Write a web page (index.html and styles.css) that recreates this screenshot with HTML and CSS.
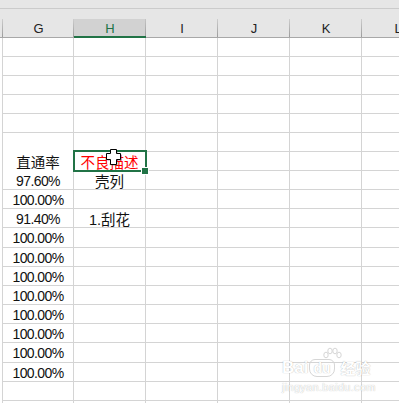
FILE: index.html
```html
<!DOCTYPE html>
<html lang="zh-CN">
<head>
<meta charset="utf-8">
<title>Sheet</title>
<link rel="stylesheet" href="styles.css">
</head>
<body>
<div class="sheet">
  <div class="top"></div>
  <div class="heads">
    <div class="ch"></div>
    <div class="ch">G</div>
    <div class="ch sel">H</div>
    <div class="ch">I</div>
    <div class="ch">J</div>
    <div class="ch">K</div>
    <div class="ch">L</div>
  </div>
  <div class="body">
    <div class="c e"></div><div class="c"></div><div class="c"></div><div class="c"></div><div class="c"></div><div class="c"></div><div class="c"></div>
    <div class="c e"></div><div class="c"></div><div class="c"></div><div class="c"></div><div class="c"></div><div class="c"></div><div class="c"></div>
    <div class="c e"></div><div class="c"></div><div class="c"></div><div class="c"></div><div class="c"></div><div class="c"></div><div class="c"></div>
    <div class="c e"></div><div class="c"></div><div class="c"></div><div class="c"></div><div class="c"></div><div class="c"></div><div class="c"></div>
    <div class="c e"></div><div class="c"></div><div class="c"></div><div class="c"></div><div class="c"></div><div class="c"></div><div class="c"></div>
    <div class="c e"></div><div class="c nb"></div><div class="c"></div><div class="c"></div><div class="c"></div><div class="c"></div><div class="c"></div>
    <div class="c e"></div><div class="c nb zh">直通率</div><div class="c zh red">不良描述</div><div class="c"></div><div class="c"></div><div class="c"></div><div class="c"></div>
    <div class="c e"></div><div class="c">97.60%</div><div class="c zh">壳列</div><div class="c"></div><div class="c"></div><div class="c"></div><div class="c"></div>
    <div class="c e"></div><div class="c">100.00%</div><div class="c"></div><div class="c"></div><div class="c"></div><div class="c"></div><div class="c"></div>
    <div class="c e"></div><div class="c">91.40%</div><div class="c mix">1.刮花</div><div class="c"></div><div class="c"></div><div class="c"></div><div class="c"></div>
    <div class="c e"></div><div class="c">100.00%</div><div class="c"></div><div class="c"></div><div class="c"></div><div class="c"></div><div class="c"></div>
    <div class="c e"></div><div class="c">100.00%</div><div class="c"></div><div class="c"></div><div class="c"></div><div class="c"></div><div class="c"></div>
    <div class="c e"></div><div class="c">100.00%</div><div class="c"></div><div class="c"></div><div class="c"></div><div class="c"></div><div class="c"></div>
    <div class="c e"></div><div class="c">100.00%</div><div class="c"></div><div class="c"></div><div class="c"></div><div class="c"></div><div class="c"></div>
    <div class="c e"></div><div class="c">100.00%</div><div class="c"></div><div class="c"></div><div class="c"></div><div class="c"></div><div class="c"></div>
    <div class="c e"></div><div class="c">100.00%</div><div class="c"></div><div class="c"></div><div class="c"></div><div class="c"></div><div class="c"></div>
    <div class="c e"></div><div class="c">100.00%</div><div class="c"></div><div class="c"></div><div class="c"></div><div class="c"></div><div class="c"></div>
    <div class="c e"></div><div class="c">100.00%</div><div class="c"></div><div class="c"></div><div class="c"></div><div class="c"></div><div class="c"></div>
    <div class="c e"></div><div class="c"></div><div class="c"></div><div class="c"></div><div class="c"></div><div class="c"></div><div class="c"></div>
    <div class="c e"></div><div class="c"></div><div class="c"></div><div class="c"></div><div class="c"></div><div class="c"></div><div class="c"></div>
  </div>

  <div class="selbox"></div>
  <div class="handle"></div>
  <svg class="cursor" width="16" height="17" viewBox="0 0 16 17">
    <path d="M5.5 1.5H11.5V5.5H15.5V11.5H11.5V16.5H5.5V11.5H1.5V5.5H5.5Z" fill="#555" opacity="0.5"/>
    <path d="M4.5 0.5H10.5V4.5H14.5V10.5H10.5V15.5H4.5V10.5H0.5V4.5H4.5Z" fill="#fff" stroke="#000" stroke-width="1"/>
  </svg>

  <div class="wm">
    <div class="wm-line">
      <span class="wm-b">Bai</span>
      <svg class="paw" width="20" height="18" viewBox="0 0 20 18">
        <ellipse cx="4" cy="8" rx="2.2" ry="2.8" fill="#fff" stroke="#d6d6d6"/>
        <ellipse cx="8" cy="4" rx="2.2" ry="2.8" fill="#fff" stroke="#d6d6d6"/>
        <ellipse cx="13" cy="4" rx="2.2" ry="2.8" fill="#fff" stroke="#d6d6d6"/>
        <ellipse cx="17" cy="8" rx="2.2" ry="2.8" fill="#fff" stroke="#d6d6d6"/>
      </svg>
      <span class="wm-du">du</span>
      <span class="wm-zh">经验</span>
    </div>
    <div class="wm-url">jingyan.baidu.com</div>
  </div>
</div>
</body>
</html>
```
FILE: styles.css
```css
html, body {
  margin: 0;
  padding: 0;
  background: #fff;
}
body {
  font-family: "Liberation Sans", "Noto Sans CJK SC", sans-serif;
}
.sheet {
  position: relative;
  width: 399px;
  height: 403px;
  overflow: hidden;
}
.top {
  height: 8px;
  background: #e6e6e6;
  border-bottom: 1px solid #cbcbcb;
}
.heads {
  display: grid;
  grid-template-columns: 3px 71px 72px 72px 72px 72px 72px;
  height: 29px;
  background: #e6e6e6;
}
.ch {
  margin-top: 10px;
  height: 19px;
  box-sizing: border-box;
  border-bottom: 1px solid #a8a8a8;
  background: linear-gradient(#cdcdcd, #9c9c9c) right top / 1px 100% no-repeat;
  display: flex;
  align-items: center;
  justify-content: center;
  font-size: 13px;
  color: #222;
  padding-top: 1px;
}
.ch.sel {
  background: linear-gradient(#c4c4c4, #9c9c9c) right top / 1px 100% no-repeat, #d2d2d2;
  border-bottom-color: #217346;
  box-shadow: inset 0 -1px 0 #217346;
  color: #217346;
}
.body {
  display: grid;
  grid-template-columns: 3px 71px 72px 72px 72px 72px 72px;
  grid-template-rows: repeat(10, 19px) 20px repeat(5, 19px) 20px 19px 19px 19px;
}
.c {
  box-sizing: border-box;
  border-right: 1px solid #d4d4d4;
  border-bottom: 1px solid #d4d4d4;
  display: flex;
  align-items: center;
  justify-content: center;
  padding-top: 1px;
  font-size: 14px;
  letter-spacing: -0.6px;
  color: #111;
  white-space: nowrap;
  overflow: hidden;
}
.c.e {
  border-bottom: none;
}
.c.nb {
  border-bottom-color: #fff;
}
.c.zh {
  font-family: "Noto Sans CJK SC", sans-serif;
  font-size: 14.5px;
  letter-spacing: 0;
}
.c.mix {
  font-size: 14.5px;
  letter-spacing: 0;
}
.c.red {
  color: #ff0000;
}
.selbox {
  position: absolute;
  left: 73px;
  top: 150px;
  width: 74px;
  height: 22px;
  box-sizing: border-box;
  border: 2px solid #217346;
}
.handle {
  position: absolute;
  left: 141px;
  top: 167px;
  width: 8px;
  height: 8px;
  box-sizing: border-box;
  background: #217346;
  border: 1px solid #fff;
}
.cursor {
  position: absolute;
  left: 106px;
  top: 149px;
}
.wm {
  position: absolute;
  left: 282px;
  top: 347px;
  color: #fff;
  text-shadow: 0 0 1px rgba(0, 0, 0, 0.35);
}
.wm-line {
  display: flex;
  align-items: flex-end;
  height: 30px;
}
.wm-b {
  font-family: "Liberation Sans", sans-serif;
  font-weight: bold;
  font-size: 17px;
  line-height: 18px;
}
.paw {
  align-self: flex-start;
  margin: 0 -20px 0 0;
  position: relative;
  left: 14px;
}
.wm-du {
  font-family: "Liberation Sans", sans-serif;
  font-weight: bold;
  font-size: 14px;
  line-height: 16px;
  padding: 0 3px;
  margin-left: 1px;
  border: 1px solid #d6d6d6;
  border-radius: 6px 6px 8px 8px;
}
.wm-zh {
  font-family: "Noto Sans CJK SC", sans-serif;
  font-weight: bold;
  font-size: 15px;
  line-height: 18px;
  margin-left: 6px;
}
.wm-url {
  font-family: "Liberation Sans", sans-serif;
  font-size: 11px;
  margin-top: 4px;
  letter-spacing: 0.3px;
}
```
